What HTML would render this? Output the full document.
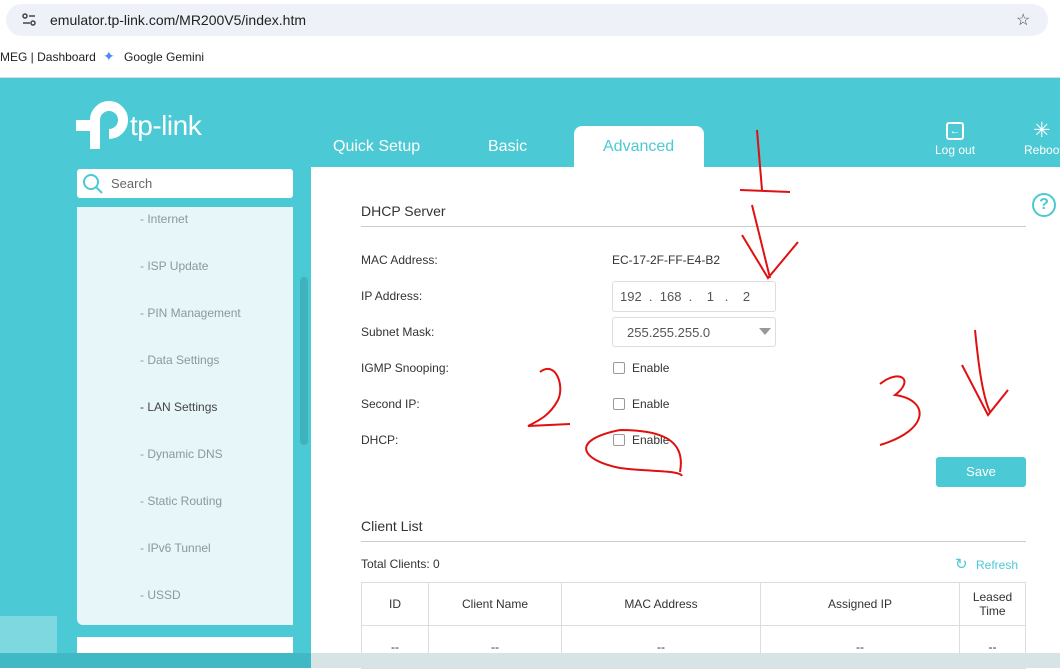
<!DOCTYPE html>
<html><head><meta charset="utf-8"><style>
*{margin:0;padding:0;box-sizing:border-box}
body{width:1060px;height:668px;overflow:hidden;font-family:"Liberation Sans",Arial,sans-serif;background:#fff;position:relative}
.a{position:absolute}
.lbl{position:absolute;left:361px;font-size:12px;color:#333}
.cb{position:absolute;left:613px;width:12px;height:12px;border:1px solid #999;border-radius:2px;background:#fff}
.en{position:absolute;left:632px;font-size:12px;color:#333}
.side{position:absolute;left:140px;font-size:12px;color:#8a9a9c}
th,td{border:1px solid #ddd;font-weight:normal;font-size:12px;color:#333;text-align:center}
</style></head><body>
<div class="a" style="left:0;top:0;width:1060px;height:78px;background:#fff"></div>
<div class="a" style="left:6px;top:4px;width:1042px;height:32px;border-radius:16px;background:#eef1f8"></div>
<svg class="a" style="left:22px;top:13px" width="14" height="14" fill="none" stroke="#444" stroke-width="1.5"><circle cx="3" cy="3" r="2"/><line x1="7" y1="3" x2="13" y2="3"/><circle cx="11" cy="10" r="2"/><line x1="1" y1="10" x2="8" y2="10"/></svg>
<div class="a" style="left:50px;top:12px;font-size:14px;color:#222">emulator.tp-link.com/MR200V5/index.htm</div>
<div class="a" style="left:1016px;top:10px;font-size:16px;color:#444">☆</div>
<div class="a" style="left:0;top:50px;font-size:12px;color:#222">MEG | Dashboard</div>
<div class="a" style="left:103px;top:48px;font-size:14px;color:#4a8af4">✦</div>
<div class="a" style="left:124px;top:50px;font-size:12px;color:#222">Google Gemini</div>
<div class="a" style="left:0;top:77px;width:1060px;height:1px;background:#dadce0"></div>
<div class="a" style="left:0;top:78px;width:1060px;height:590px;background:#4bc9d4"></div>
<svg class="a" style="left:76px;top:100px" width="52" height="50" viewBox="0 0 52 50"><path d="M19 20 A14 14 0 1 1 33 34" fill="none" stroke="#fff" stroke-width="10"/><rect x="14" y="18" width="10" height="31" fill="#fff"/><rect x="0" y="20" width="15" height="11" fill="#fff"/></svg>
<div class="a" style="left:130px;top:110px;font-size:28px;color:#fff;letter-spacing:-0.5px">tp-link</div>
<div class="a" style="left:333px;top:138px;font-size:16px;color:#fff">Quick Setup</div>
<div class="a" style="left:488px;top:138px;font-size:16px;color:#fff">Basic</div>
<div class="a" style="left:574px;top:126px;width:130px;height:42px;background:#fff;border-radius:8px 8px 0 0"></div>
<div class="a" style="left:603px;top:138px;font-size:16px;color:#4bc9d4">Advanced</div>
<div class="a" style="left:946px;top:122px;width:18px;height:18px;border:2px solid #fff;border-radius:3px;color:#fff;font-size:11px;line-height:14px;text-align:center;font-weight:bold">←</div>
<div class="a" style="left:935px;top:143px;font-size:12px;color:#fff">Log out</div>
<div class="a" style="left:1033px;top:118px;font-size:21px;color:#fff">✳</div>
<div class="a" style="left:1024px;top:143px;font-size:12px;color:#fff">Reboot</div>
<div class="a" style="left:311px;top:167px;width:749px;height:501px;background:#fff"></div>
<div class="a" style="left:77px;top:169px;width:216px;height:29px;background:#fff;border-radius:3px"></div>
<svg class="a" style="left:82px;top:173px" width="22" height="22"><circle cx="9" cy="9" r="7" fill="none" stroke="#4bc9d4" stroke-width="2"/><line x1="14" y1="14" x2="20" y2="20" stroke="#4bc9d4" stroke-width="2"/></svg>
<div class="a" style="left:111px;top:176px;font-size:13px;color:#666">Search</div>
<div class="a" style="left:77px;top:207px;width:216px;height:418px;background:#e7f6f8;border-radius:0 0 0 6px"></div>
<div class="a" style="left:300px;top:277px;width:8px;height:168px;background:#3fb3bd;border-radius:4px"></div>
<div class="side" style="top:212px">- Internet</div>
<div class="side" style="top:259px">- ISP Update</div>
<div class="side" style="top:306px">- PIN Management</div>
<div class="side" style="top:353px">- Data Settings</div>
<div class="side" style="top:400px;color:#444">- LAN Settings</div>
<div class="side" style="top:447px">- Dynamic DNS</div>
<div class="side" style="top:494px">- Static Routing</div>
<div class="side" style="top:541px">- IPv6 Tunnel</div>
<div class="side" style="top:588px">- USSD</div>
<div class="a" style="left:77px;top:637px;width:216px;height:31px;background:#fff"></div>
<div class="a" style="left:0;top:616px;width:57px;height:52px;background:#7dd8e0"></div>
<div class="a" style="left:0;top:653px;width:311px;height:15px;background:#41b9c4"></div>
<div class="a" style="left:361px;top:203px;font-size:14px;color:#333">DHCP Server</div>
<div class="a" style="left:361px;top:226px;width:665px;height:1px;background:#ccc"></div>
<div class="a" style="left:1032px;top:193px;width:24px;height:24px;border:2.5px solid #4bc9d4;border-radius:50%;color:#4bc9d4;font-size:16px;font-weight:bold;text-align:center;line-height:19px">?</div>
<div class="lbl" style="top:253px">MAC Address:</div><div class="a" style="left:612px;top:253px;font-size:12px;color:#333">EC-17-2F-FF-E4-B2</div>
<div class="lbl" style="top:289px">IP Address:</div>
<div class="a" style="left:612px;top:281px;width:164px;height:31px;border:1px solid #ddd;border-radius:3px"></div>
<div class="a" style="left:620px;top:289px;font-size:13px;color:#555">192&nbsp;&nbsp;.&nbsp;&nbsp;168&nbsp;&nbsp;.&nbsp;&nbsp;&nbsp;&nbsp;1&nbsp;&nbsp;&nbsp;.&nbsp;&nbsp;&nbsp;&nbsp;2</div>
<div class="lbl" style="top:325px">Subnet Mask:</div>
<div class="a" style="left:612px;top:317px;width:164px;height:30px;border:1px solid #ddd;border-radius:3px"></div>
<div class="a" style="left:627px;top:325px;font-size:13px;color:#555">255.255.255.0</div>
<div class="a" style="left:759px;top:328px;width:0;height:0;border-left:6px solid transparent;border-right:6px solid transparent;border-top:7px solid #999"></div>
<div class="lbl" style="top:361px">IGMP Snooping:</div><div class="cb" style="top:362px"></div><div class="en" style="top:361px">Enable</div>
<div class="lbl" style="top:397px">Second IP:</div><div class="cb" style="top:398px"></div><div class="en" style="top:397px">Enable</div>
<div class="lbl" style="top:433px">DHCP:</div><div class="cb" style="top:434px"></div><div class="en" style="top:433px">Enable</div>
<div class="a" style="left:936px;top:457px;width:90px;height:30px;background:#4bc9d4;border-radius:3px;color:#fff;font-size:13px;text-align:center;line-height:30px">Save</div>
<div class="a" style="left:361px;top:518px;font-size:14px;color:#333">Client List</div>
<div class="a" style="left:361px;top:541px;width:665px;height:1px;background:#ccc"></div>
<div class="a" style="left:361px;top:557px;font-size:12px;color:#333">Total Clients: 0</div>
<div class="a" style="left:955px;top:555px;font-size:15px;color:#4bc9d4">↻</div>
<div class="a" style="left:976px;top:558px;font-size:12px;color:#4bc9d4">Refresh</div>
<table class="a" style="left:361px;top:582px;width:665px;border-collapse:collapse">
<tr style="height:43px"><th style="width:67px">ID</th><th style="width:133px">Client Name</th><th style="width:199px">MAC Address</th><th style="width:199px">Assigned IP</th><th>Leased<br>Time</th></tr>
<tr style="height:43px"><td>--</td><td>--</td><td>--</td><td>--</td><td>--</td></tr></table>
<div class="a" style="left:311px;top:653px;width:749px;height:15px;background:#d7e4e6"></div>
<svg class="a" style="left:0;top:0" width="1060" height="668" fill="none" stroke="#e01010" stroke-width="2">
<path d="M757 130 L762 190 M740 190 L790 192 M752 205 L770 278 M742 235 L768 278 L798 242"/>
<path d="M540 372 C555 360 565 385 558 400 C550 415 540 420 528 426 L570 424"/>
<path d="M620 430 C570 440 580 460 620 468 C650 472 680 470 682 476 M680 472 C685 445 670 430 620 430"/>
<path d="M880 384 C900 368 915 380 895 395 C930 400 930 430 880 445"/>
<path d="M962 365 L988 415 L1008 390 M975 330 C978 360 982 395 990 412"/>
</svg>
</body></html>
